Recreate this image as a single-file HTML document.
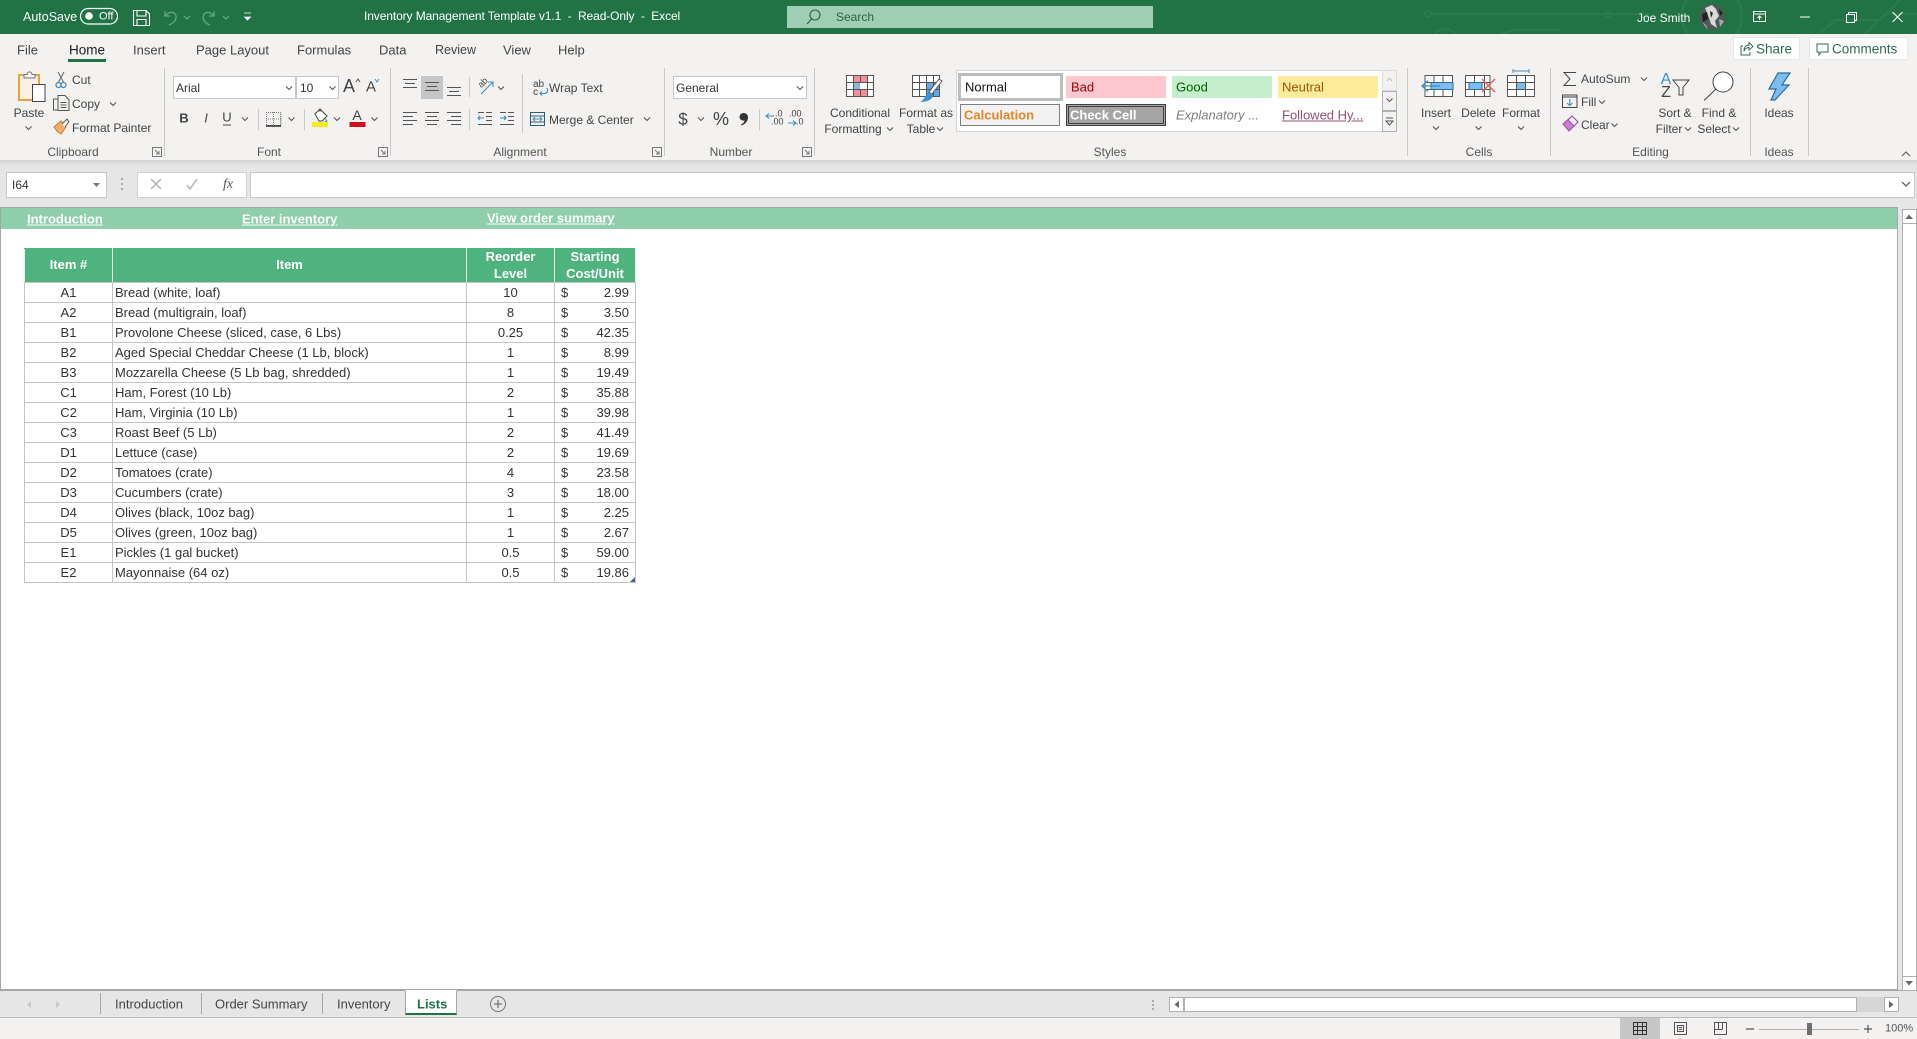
<!DOCTYPE html>
<html lang="en"><head><meta charset="utf-8"><title>Inventory Management Template v1.1 - Read-Only - Excel</title>
<style>
html,body{margin:0;padding:0;width:1917px;height:1039px;overflow:hidden;background:#fff;font-family:"Liberation Sans",sans-serif;color:#444}
.b{position:absolute;box-sizing:border-box}
.t{position:absolute;white-space:nowrap;line-height:1;transform:translateY(-50%);font-size:12px}
.c{transform:translate(-50%,-50%)}
.g{color:#555}
.w{color:#fff}
svg{position:absolute;left:0;top:0}
table{position:absolute;left:24px;top:248px;border-collapse:collapse;table-layout:fixed;width:611px;font-size:13px;color:#333}
td,th{border:1px solid #c4c4c4;padding:0;height:19px;line-height:19px;box-sizing:border-box;white-space:nowrap;overflow:hidden}
th{background:#4fb37f;color:#fff;font-weight:bold;text-align:center;height:34px;line-height:16.5px;border-color:#4fb37f #e4f2ea #c4c4c4 #e4f2ea}
td.n{padding-left:2px}
td.m{text-align:center}
td.p{padding:0 6px 0 6px}
td.p b{font-weight:normal;float:right}
.lk{position:absolute;color:#fff;font-weight:bold;font-size:13px;text-decoration:underline;line-height:1;transform:translateY(-50%);white-space:nowrap}
</style></head><body>
<!-- backgrounds -->
<div class="b" style="left:0;top:0;width:1917px;height:34px;background:#217346"></div>
<div class="b" style="left:0;top:34px;width:1917px;height:126px;background:#f3f2f1"></div>
<div class="b" style="left:0;top:160px;width:1917px;height:47px;background:#e6e6e6"></div>
<div class="b" style="left:0;top:160px;width:1917px;height:6px;background:linear-gradient(#d2d2d2,#e6e6e6)"></div>
<div class="b" style="left:1898px;top:207px;width:19px;height:783px;background:#e6e6e6"></div>
<div class="b" style="left:0;top:207px;width:1898px;height:783px;background:#fff;border:1px solid #a6a6a6;border-width:1px 1px 1px 1px"></div>
<div class="b" style="left:1px;top:208px;width:1896px;height:21px;background:#8fcfac"></div>
<div class="b" style="left:0;top:990px;width:1917px;height:28px;background:#e6e6e6;border-top:1px solid #a6a6a6;border-bottom:1px solid #b8b8b8"></div>
<div class="b" style="left:0;top:1018px;width:1917px;height:21px;background:#f3f2f1"></div>
<!-- search -->
<div class="b" style="left:787px;top:6px;width:366px;height:22px;background:#a0ceb5"></div>
<!-- share / comments -->
<div class="b" style="left:1733px;top:37px;width:67px;height:23px;background:#fff;border:1px solid #e8e8e8"></div>
<div class="b" style="left:1809px;top:37px;width:99px;height:23px;background:#fff;border:1px solid #e8e8e8"></div>
<!-- selects -->
<div class="b" style="left:173px;top:76px;width:123px;height:23px;background:#fff;border:1px solid #c8c8c8"></div>
<div class="b" style="left:296px;top:76px;width:43px;height:23px;background:#fff;border:1px solid #c8c8c8"></div>
<div class="b" style="left:673px;top:76px;width:134px;height:23px;background:#fff;border:1px solid #c8c8c8"></div>
<div class="b" style="left:421px;top:76px;width:22px;height:23px;background:#c6c6c6"></div>
<!-- style gallery -->
<div class="b" style="left:956px;top:70px;width:427px;height:62px;background:#fff;border:1px solid #d6d6d6"></div>
<div class="b" style="left:958px;top:73px;width:105px;height:28px;background:#fff;border:3px solid #bdbdbd"></div>
<div class="b" style="left:1066px;top:76px;width:100px;height:22px;background:#ffc7ce"></div>
<div class="b" style="left:1172px;top:76px;width:100px;height:22px;background:#c6efce"></div>
<div class="b" style="left:1278px;top:76px;width:100px;height:22px;background:#ffeb9c"></div>
<div class="b" style="left:960px;top:104px;width:100px;height:22px;background:#f2f2f2;border:1px solid #7f7f7f"></div>
<div class="b" style="left:1066px;top:104px;width:100px;height:22px;background:#a5a5a5;border:3px double #3f3f3f"></div>
<div class="b" style="left:1382px;top:70px;width:15px;height:21px;background:#f3f2f1;border:1px solid #dcdcdc"></div>
<div class="b" style="left:1382px;top:91px;width:15px;height:20px;background:#f3f2f1;border:1px solid #b0b0b0"></div>
<div class="b" style="left:1382px;top:111px;width:15px;height:21px;background:#f3f2f1;border:1px solid #b0b0b0"></div>
<!-- formula bar -->
<div class="b" style="left:6px;top:172px;width:101px;height:26px;background:#fff;border:1px solid #c8c8c8"></div>
<div class="b" style="left:137px;top:172px;width:110px;height:26px;background:#fff;border:1px solid #d0d0d0"></div>
<div class="b" style="left:250px;top:172px;width:1665px;height:26px;background:#fff;border:1px solid #c8c8c8"></div>
<!-- scrollbars -->
<div class="b" style="left:1902px;top:209px;width:15px;height:781px;background:#fff;border:1px solid #b0b0b0"></div>
<div class="b" style="left:1902px;top:209px;width:15px;height:15px;background:#fff;border:1px solid #b0b0b0"></div>
<div class="b" style="left:1902px;top:976px;width:15px;height:15px;background:#fff;border:1px solid #b0b0b0"></div>
<div class="b" style="left:1169px;top:997px;width:15px;height:15px;background:#fff;border:1px solid #b0b0b0"></div>
<div class="b" style="left:1184px;top:997px;width:673px;height:15px;background:#fff;border:1px solid #b0b0b0"></div>
<div class="b" style="left:1857px;top:997px;width:27px;height:15px;background:#d6d6d6"></div>
<div class="b" style="left:1884px;top:997px;width:15px;height:15px;background:#fff;border:1px solid #b0b0b0"></div>
<!-- lists tab -->
<div class="b" style="left:405px;top:990px;width:52px;height:25px;background:#fff;border:1px solid #a6a6a6;border-top:1px solid #fff;border-bottom:2px solid #217346"></div>
<div class="b" style="left:1620px;top:1018px;width:40px;height:21px;background:#c6c6c6"></div>

<!-- links -->
<span class="lk" style="left:27px;top:219px">Introduction</span>
<span class="lk" style="left:242px;top:219px">Enter inventory</span>
<span class="lk" style="left:487px;top:218px">View order summary</span>

<table>
<colgroup><col style="width:88px"><col style="width:354px"><col style="width:88px"><col style="width:81px"></colgroup>
<tr><th>Item #</th><th>Item</th><th>Reorder<br>Level</th><th>Starting<br>Cost/Unit</th></tr>
<tr style="height:20px"><td class="m">A1</td><td class="n">Bread (white, loaf)</td><td class="m">10</td><td class="p">$<b>2.99</b></td></tr>
<tr style="height:20px"><td class="m">A2</td><td class="n">Bread (multigrain, loaf)</td><td class="m">8</td><td class="p">$<b>3.50</b></td></tr>
<tr style="height:20px"><td class="m">B1</td><td class="n">Provolone Cheese (sliced, case, 6 Lbs)</td><td class="m">0.25</td><td class="p">$<b>42.35</b></td></tr>
<tr style="height:20px"><td class="m">B2</td><td class="n">Aged Special Cheddar Cheese (1 Lb, block)</td><td class="m">1</td><td class="p">$<b>8.99</b></td></tr>
<tr style="height:20px"><td class="m">B3</td><td class="n">Mozzarella Cheese (5 Lb bag, shredded)</td><td class="m">1</td><td class="p">$<b>19.49</b></td></tr>
<tr style="height:20px"><td class="m">C1</td><td class="n">Ham, Forest (10 Lb)</td><td class="m">2</td><td class="p">$<b>35.88</b></td></tr>
<tr style="height:20px"><td class="m">C2</td><td class="n">Ham, Virginia (10 Lb)</td><td class="m">1</td><td class="p">$<b>39.98</b></td></tr>
<tr style="height:20px"><td class="m">C3</td><td class="n">Roast Beef (5 Lb)</td><td class="m">2</td><td class="p">$<b>41.49</b></td></tr>
<tr style="height:20px"><td class="m">D1</td><td class="n">Lettuce (case)</td><td class="m">2</td><td class="p">$<b>19.69</b></td></tr>
<tr style="height:20px"><td class="m">D2</td><td class="n">Tomatoes (crate)</td><td class="m">4</td><td class="p">$<b>23.58</b></td></tr>
<tr style="height:20px"><td class="m">D3</td><td class="n">Cucumbers (crate)</td><td class="m">3</td><td class="p">$<b>18.00</b></td></tr>
<tr style="height:20px"><td class="m">D4</td><td class="n">Olives (black, 10oz bag)</td><td class="m">1</td><td class="p">$<b>2.25</b></td></tr>
<tr style="height:20px"><td class="m">D5</td><td class="n">Olives (green, 10oz bag)</td><td class="m">1</td><td class="p">$<b>2.67</b></td></tr>
<tr style="height:20px"><td class="m">E1</td><td class="n">Pickles (1 gal bucket)</td><td class="m">0.5</td><td class="p">$<b>59.00</b></td></tr>
<tr style="height:20px"><td class="m">E2</td><td class="n">Mayonnaise (64 oz)</td><td class="m">0.5</td><td class="p">$<b>19.86</b></td></tr>
</table>

<!-- SVG icons -->
<svg width="1917" height="1039" viewBox="0 0 1917 1039" fill="none" stroke-width="1">
<defs><path id="c" d="M-3-1.5 0 1.5 3-1.5" stroke="#555" fill="none" stroke-width="1.1"/>
<path id="dl" d="M.5.5H9.5V9.5H.5ZM3 3 7 7M7 4V7H4" stroke="#777" fill="none"/></defs>
<!-- circuit pattern, clipped to the title bar -->
<svg x="0" y="0" width="1917" height="34" style="position:static">
<g stroke="#2a7a4e" stroke-width="2">
<path d="M1431 14H1605L1650 14M1500 34 1515 30H1560"/>
<circle cx="1428" cy="14" r="3"/><circle cx="1608" cy="14" r="3"/>
<circle cx="1445" cy="42" r="13"/>
<circle cx="1712" cy="16" r="30"/>
<path d="M1820 34 1835 20H1880L1900 0M1865 34 1885 14H1917"/>
</g></svg>
<!-- toggle -->
<rect x="80.5" y="8.5" width="37" height="15.500" rx="7.700" stroke="#fff" stroke-width="1.200"/>
<circle cx="89" cy="16" r="3.800" fill="#fff"/>
<!-- save -->
<g stroke="#fff" stroke-width="1.100"><path d="M133.500 10.500H146L149.500 14V25.500H133.500ZM137 10.500V16H146V10.500M137 25.500V19.500H146V25.500"/></g>
<!-- undo / redo -->
<g stroke="#6aa888" stroke-width="1.200"><path d="M165 11V16H170M165 16C170 10 177 12 176 18 175.500 21 172 24 169 25"/><path d="M214 11V16H209M214 16C209 10 203 12 203 18 204 21 206 24 210 25"/>
<path d="M184 16 187 19 190 16M223 16 226 19 229 16"/></g>
<path d="M244 13H251M244.500 17H250.500L247.500 20Z" stroke="#fff" fill="#fff" stroke-width=".8"/>
<!-- search icon -->
<g stroke="#2f5f47" stroke-width="1.100"><circle cx="815" cy="15" r="5"/><path d="M811.500 19 807 24"/></g>
<!-- avatar -->
<circle cx="1712" cy="17" r="13" fill="#4c5a53"/>
<path d="M1705 8 1712 5 1716 9 1719 16 1715 21 1717 28 1711 24 1708 15Z" fill="#d8d8d8"/>
<path d="M1702 14 1707 12 1708 19 1703 22ZM1719 9 1723 13 1720 16Z" fill="#222"/>
<path d="M1719 19 1724 21 1720 27ZM1702 22 1706 25 1708 30Z" fill="#aaa"/>
<path d="M1710 11 1713 13 1711 18Z" fill="#222"/>
<!-- window controls -->
<g stroke="#fff" stroke-width="1"><path d="M1753.500 11.500H1765.500V21.500H1753.500ZM1753.500 14H1765.500M1759.500 20V16M1757.500 18 1759.500 16 1761.500 18"/>
<path d="M1800 17H1810"/><path d="M1846.500 14.500H1854.500V22.500H1846.500ZM1848.500 14.500V12.500H1856.500V20.500H1854.500"/><path d="M1892.500 12 1902.500 22M1902.500 12 1892.500 22"/></g>
<!-- home underline -->
<rect x="68" y="59" width="38" height="3" fill="#217346"/>
<!-- share/comment icons -->
<g stroke="#3a6a52" stroke-width="1"><path d="M1743 46H1741V55H1750V52M1744 51C1744 47 1746 45 1749 45V42.500L1753 46.500 1749 50V47.500C1747 47.500 1745 49 1744 51Z"/>
<path d="M1817 44H1828V52H1821L1819 55V52H1817Z"/></g>
<!-- ribbon separators -->
<g stroke="#c8c8c8"><path d="M164.500 68V156M390.500 68V156M664.500 68V156M814.500 68V156M1407.500 68V156M1550.500 68V156M1750.500 68V156M1808.500 68V156"/>
<path d="M258.500 109V130M304.500 109V130M469.500 77V97M469.500 109V130M522.500 74V133M759.500 109V130"/></g>
<!-- dialog launchers -->
<use href="#dl" x="152" y="147"/><use href="#dl" x="378" y="147"/><use href="#dl" x="652" y="147"/><use href="#dl" x="802" y="147"/>
<!-- chevrons -->
<g>
<use href="#c" x="28.500" y="128"/><use href="#c" x="113" y="104"/><use href="#c" x="289" y="88"/><use href="#c" x="332.500" y="88"/>
<use href="#c" x="245" y="119"/><use href="#c" x="291.500" y="119"/><use href="#c" x="337" y="119"/><use href="#c" x="374.500" y="119"/>
<use href="#c" x="501" y="88"/><use href="#c" x="647" y="119"/><use href="#c" x="800" y="88"/><use href="#c" x="701" y="119"/>
<use href="#c" x="890" y="129"/><use href="#c" x="940" y="129"/>
<use href="#c" x="1436" y="128"/><use href="#c" x="1478.500" y="128"/><use href="#c" x="1521" y="128"/>
<use href="#c" x="1644" y="79"/><use href="#c" x="1602" y="102"/><use href="#c" x="1614.500" y="125"/><use href="#c" x="1688" y="129"/><use href="#c" x="1736" y="129"/>
<use href="#c" x="1389.500" y="100"/>
</g>
<!-- clipboard -->
<path d="M19 75H39V100H19Z" stroke="#e8a33d" stroke-width="2" fill="#f8f1e4"/>
<path d="M24 78V74.500H27C27 71 32 71 32 74.500H35V78Z" stroke="#777" fill="#f3f2f1"/>
<rect x="32.500" y="84.500" width="12.500" height="17" fill="#fff" stroke="#444"/>
<g stroke="#666"><path d="M58 72 63.500 82M64 72 58.500 82"/></g>
<g stroke="#3d8fc4" stroke-width="1.300"><circle cx="58.500" cy="85" r="2.500"/><circle cx="63.500" cy="85" r="2.500"/></g>
<g stroke="#555"><path d="M58 99H53.500V110H58M58 95.500H65L69 100V110.500H58ZM60.500 102.500H66.500M60.500 105H66.500M60.500 107.500H66.500"/></g>
<path d="M54 127 61 121 66 127 61 134 57 131Z" fill="#efb070" stroke="#d47a2a"/>
<path d="M62 124 67 119 69 122 65 127" stroke="#555" fill="#fff"/>
<!-- font icons -->
<path d="M356 82 358 79 360 82" stroke="#555"/>
<path d="M375 79 377 82 379 79" stroke="#3d8fc4"/>
<path d="M223 125H231" stroke="#444"/>
<path d="M266 112.500H281V125.500H266" stroke="#777" stroke-dasharray="1 1"/><path d="M266.500 112V125M280.500 112V125M273.500 112V125M266 119H281" stroke="#888" stroke-dasharray="1 1"/><path d="M266 126H281" stroke="#222" stroke-width="1.400"/>
<path d="M315 114 320 109 327 116 322 121H319ZM320 109V112" stroke="#444" fill="#fff"/><path d="M325 118 327 121 325 122" stroke="#3d8fc4"/>
<rect x="312" y="122" width="16" height="5" fill="#f4ec1f"/>
<rect x="349.500" y="122" width="16" height="5" fill="#d0101c"/>
<!-- align -->
<g stroke="#555"><path d="M403 79.500H417M405 83.500H415M403 87.500H417"/>
<path d="M425 82.500H439M427 86.500H437M425 90.500H439"/>
<path d="M447 87.500H461M449 91.500H459M447 95.500H461"/>
<path d="M403 112.500H417M403 116.500H413M403 120.500H417M403 124.500H413"/>
<path d="M425 112.500H439M427 116.500H437M425 120.500H439M427 124.500H437"/>
<path d="M447 112.500H461M451 116.500H461M447 120.500H461M451 124.500H461"/>
<path d="M486 112.500H492M486 116.500H492M486 120.500H492M478 124.500H492M478 112.500H484"/>
<path d="M508 112.500H514M500 112.500H506M508 116.500H514M508 120.500H514M500 124.500H514"/></g>
<g stroke="#3d8fc4" stroke-width="1.100"><path d="M478 118H484M480 116 478 118 480 120"/><path d="M500 118H506M504 116 506 118 504 120"/>
<path d="M481 94 493 82M488 82H493V87"/>
<path d="M547 88C549 92 546 94 543 93.500H540M542 91.500 540 93.500 542 95.500"/></g>
<!-- merge -->
<path d="M530.500 112.500H544.500V125.500H530.500ZM530.500 116H544.500M530.500 122H544.500" stroke="#2a5d7a"/>
<path d="M533 119H542M535 117 533 119 535 121M540 117 542 119 540 121" stroke="#3d8fc4"/>
<!-- comma style -->
<path d="M743.500 113C746.500 113 748 115 748 117.500 748 121 745.500 124 741.500 125.500L741 124.500C743 123.500 744.500 122 744.500 120.500 741.500 121 739.500 119 739.500 117 739.500 114.800 741.300 113 743.500 113Z" fill="#333"/>
<!-- decimals -->
<path d="M766 116H774M769 113.500 766 116 769 118.500" stroke="#3d8fc4" stroke-width="1.100"/>
<path d="M788 123H796M793 120.500 796 123 793 125.500" stroke="#3d8fc4" stroke-width="1.100"/>
<!-- conditional formatting -->
<g>
<rect x="846.500" y="75.500" width="27" height="21" fill="#fff"/>
<path d="M853 75.500H867V82.500H853ZM853 89.500H867V96.500H853Z" fill="#f38f96"/><rect x="853" y="82.500" width="7" height="7" fill="#8ab6e0"/>
<path d="M846.500 75.500H873.500V96.500H846.500ZM846.500 82.500H873.500M846.500 89.500H873.500M853.500 75.500V96.500M867.500 75.500V96.500" stroke="#555"/>
<path d="M860.500 75.500V82.500M860.500 89.500V96.500" stroke="#555"/>
<!-- format as table -->
<rect x="912.500" y="75.500" width="27" height="21" fill="#fff"/>
<rect x="926" y="82.500" width="14" height="14" fill="#62a7e6"/>
<path d="M912.500 75.500H939.500V96.500H912.500ZM912.500 82.500H939.500M912.500 89.500H939.500M919.500 75.500V96.500M926.500 75.500V96.500M933.500 75.500V96.500" stroke="#555"/>
<path d="M942 81 932 94 929 92 939 79Z" fill="#fff" stroke="#555"/>
<path d="M930 92 933.500 95C932 100 927 102 920 102 925 100 925 94 930 92Z" fill="#3d8fd8"/>
</g>
<!-- gallery arrows -->
<path d="M1387 81 1389.500 78 1392 81" stroke="#c0c0c0"/>
<path d="M1386 118H1393M1386 121H1393L1389.500 125Z" stroke="#555" />
<!-- cells -->
<g>
<path d="M1425 75.500H1452.500V96.500H1425ZM1425 82.500H1452.500M1425 89.500H1452.500M1434 75.500V96.500M1443 75.500V96.500" stroke="#555" fill="#fff"/>
<rect x="1431" y="82.500" width="22" height="7" fill="#7dbdee" stroke="#2a6da0"/>
<path d="M1440 86H1422M1428 80.500 1422 86 1428 91.500" stroke="#3d8fc4" stroke-width="1.300" fill="none"/>
<path d="M1465.500 75.500H1490V96.500H1465.500ZM1465.500 82.500H1490M1465.500 89.500H1490M1474.500 75.500V96.500M1484.500 75.500V96.500" stroke="#555" fill="#fff"/>
<rect x="1469" y="82.500" width="13" height="7" fill="#7dbdee" stroke="#2a6da0"/>
<path d="M1482 79 1495 92M1495 79 1482 92" stroke="#e8625c" stroke-width="1.500"/>
<rect x="1507.500" y="75.500" width="27" height="21" fill="#fff"/>
<rect x="1516" y="82" width="10" height="8" fill="#7dbdee"/>
<path d="M1507.500 75.500H1534.500V96.500H1507.500ZM1507.500 82.500H1534.500M1507.500 89.500H1534.500M1516.500 75.500V96.500M1525.500 75.500V96.500" stroke="#555"/>
<path d="M1513 71H1529M1513 69V73M1529 69V73" stroke="#3d8fc4"/>
</g>
<!-- editing -->
<path d="M1576 72.500H1564L1570 79 1564 85.500H1576" stroke="#444"/>
<path d="M1562.500 95H1577V107.500H1562.500ZM1562.500 97H1577" stroke="#444"/>
<path d="M1569.800 99V105.500M1567 103 1569.800 105.500 1572.500 103" stroke="#3d8fc4" stroke-width="1.100"/>
<path d="M1563 124 1572 116 1578 122 1569 131Z" fill="#c97fd0" stroke="#9b4ea3"/><path d="M1572 116 1578 122 1574 126 1568 120Z" fill="#f6eef7" stroke="#9b4ea3"/>
<path d="M1673 80H1689L1683 87.500V95H1679V87.500Z" stroke="#444"/>
<circle cx="1723" cy="82" r="10" stroke="#444" fill="#fff"/><path d="M1716 89 1704 100.500" stroke="#444"/>
<!-- bolt -->
<path d="M1778 73H1790L1782 85H1789L1775 100H1771L1776 89H1769Z" fill="#7dbdee" stroke="#2a6da0" stroke-width="1.200"/>
<path d="M1902 156 1906 152 1910 156" stroke="#555"/>
<!-- formula bar -->
<path d="M93 183H100L96.500 187Z" fill="#777"/>
<g fill="#aaa"><rect x="121" y="178" width="2" height="2"/><rect x="121" y="183" width="2" height="2"/><rect x="121" y="188" width="2" height="2"/>
<rect x="1152" y="1000" width="2" height="2"/><rect x="1152" y="1004" width="2" height="2"/><rect x="1152" y="1008" width="2" height="2"/></g>
<path d="M151 179 161 189M161 179 151 189M187 185 190 189 197 179" stroke="#bbb" stroke-width="1.600"/>
<path d="M1902 182 1906 186 1910 182" stroke="#555" stroke-width="1.200"/>
<!-- scrollbar arrows -->
<path d="M1905.500 219H1913L1909 214.500Z M1905.500 981H1913L1909 985.500Z" fill="#666"/>
<path d="M1179 1001V1008L1174.500 1004.500Z M1889 1001V1008L1893.500 1004.500Z" fill="#666"/>
<!-- sheet nav -->
<path d="M31 1001V1008L27 1004.500ZM56 1001V1008L60 1004.500Z" fill="#c8c8c8"/>
<path d="M100.500 993V1014M201.500 993V1014M322.500 993V1014" stroke="#a6a6a6"/>
<g stroke="#777"><circle cx="498" cy="1004" r="7.500"/><path d="M494 1004H502M498 1000V1008" stroke-width="1.300"/></g>
<!-- status icons -->
<path d="M1633.500 1022.500H1646.500V1034.500H1633.500ZM1633.500 1026.500H1646.500M1633.500 1030.500H1646.500M1637.500 1022.500V1034.500M1642.500 1022.500V1034.500" stroke="#333"/>
<path d="M1674.500 1022.500H1686.500V1034.500H1674.500ZM1677.500 1025.500H1683.500V1031.500H1677.500ZM1679 1027.500H1682M1679 1029.500H1682" stroke="#555"/>
<path d="M1714.500 1022.500H1726.500V1034.500H1714.500ZM1714.500 1029.500H1722.500M1718.500 1022.500V1029.500M1722.500 1022.500V1029.500" stroke="#555"/>
<path d="M1746 1029H1754M1864 1029H1872M1868 1025V1033" stroke="#555" stroke-width="1.200"/>
<path d="M1759 1029.500H1859" stroke="#b0b0b0"/>
<rect x="1807" y="1023" width="5" height="12" fill="#6f6f6f"/>
<rect x="630" y="577" width="5" height="5" fill="#4b5c9c" style="clip-path:polygon(100% 0,100% 100%,0 100%)"/>
</svg>

<!-- Title bar text -->
<span class="t w" style="left:23px;top:17px;font-size:12.500px">AutoSave</span>
<span class="t w" style="left:99px;top:17px;font-size:11px">Off</span>
<span class="t w" style="left:364px;top:16px;font-size:12px;letter-spacing:-.1px">Inventory Management Template v1.1&nbsp; -&nbsp; Read-Only&nbsp; -&nbsp; Excel</span>
<span class="t" style="left:836px;top:17px;font-size:12px;color:#2f5f47">Search</span>
<span class="t w" style="left:1637px;top:18px;font-size:12px">Joe Smith</span>
<!-- Tabs -->
<span class="t" style="left:17px;top:50px;font-size:13px">File</span>
<span class="t" style="left:69px;top:50px;font-size:13.500px;color:#222">Home</span>
<span class="t" style="left:133px;top:50px;font-size:13px">Insert</span>
<span class="t" style="left:196px;top:50px;font-size:13px">Page Layout</span>
<span class="t" style="left:297px;top:50px;font-size:13px">Formulas</span>
<span class="t" style="left:379px;top:50px;font-size:13px">Data</span>
<span class="t" style="left:435px;top:50px;font-size:12.500px">Review</span>
<span class="t" style="left:503px;top:50px;font-size:13px">View</span>
<span class="t" style="left:558px;top:50px;font-size:13px">Help</span>
<span class="t" style="left:1756px;top:49px;font-size:13.500px;color:#2f6b4c">Share</span>
<span class="t" style="left:1832px;top:49px;font-size:13.500px;color:#2f6b4c">Comments</span>
<!-- Clipboard -->
<span class="t c" style="left:29px;top:113px">Paste</span>
<span class="t" style="left:72px;top:80px">Cut</span>
<span class="t" style="left:72px;top:104px">Copy</span>
<span class="t" style="left:72px;top:128px">Format Painter</span>
<span class="t c g" style="left:73px;top:152px">Clipboard</span>
<!-- Font -->
<span class="t" style="left:176px;top:88px;font-size:12px;color:#333">Arial</span>
<span class="t" style="left:300px;top:88px;font-size:12px;color:#333">10</span>
<span class="t" style="left:343px;top:86px;font-size:18px">A</span>
<span class="t" style="left:366px;top:87px;font-size:15px">A</span>
<span class="t c" style="left:184px;top:118px;font-size:13px;font-weight:bold">B</span>
<span class="t c" style="left:206px;top:118px;font-size:13px;font-style:italic">I</span>
<span class="t c" style="left:227px;top:117px;font-size:13px">U</span>
<span class="t c" style="left:357px;top:115px;font-size:14px">A</span>
<span class="t c g" style="left:269px;top:152px">Font</span>
<!-- Alignment -->
<span class="t" style="left:478px;top:83px;font-size:9px;transform:translateY(-50%) rotate(-45deg)">ab</span>
<span class="t" style="left:533px;top:85px;font-size:10px">ab</span>
<span class="t" style="left:533px;top:93px;font-size:10px">c</span>
<span class="t" style="left:549px;top:88px">Wrap Text</span>
<span class="t" style="left:549px;top:120px">Merge &amp; Center</span>
<span class="t c g" style="left:520px;top:152px">Alignment</span>
<!-- Number -->
<span class="t" style="left:676px;top:88px;color:#333">General</span>
<span class="t c" style="left:683px;top:119px;font-size:17px">$</span>
<span class="t c" style="left:721px;top:119px;font-size:18px">%</span>
<span class="t" style="left:775px;top:114px;font-size:9px">.0</span>
<span class="t" style="left:771px;top:122px;font-size:9px">.00</span>
<span class="t" style="left:789px;top:114px;font-size:9px">.00</span>
<span class="t" style="left:796px;top:122px;font-size:9px">.0</span>
<span class="t c g" style="left:731px;top:152px">Number</span>
<!-- Styles -->
<span class="t c" style="left:860px;top:113px">Conditional</span>
<span class="t c" style="left:853px;top:129px">Formatting</span>
<span class="t c" style="left:926px;top:113px">Format as</span>
<span class="t c" style="left:921px;top:129px">Table</span>
<span class="t" style="left:965px;top:87px;font-size:13px;color:#111">Normal</span>
<span class="t" style="left:1071px;top:87px;font-size:13px;color:#9c0006">Bad</span>
<span class="t" style="left:1176px;top:87px;font-size:13px;color:#006100">Good</span>
<span class="t" style="left:1282px;top:87px;font-size:13px;color:#9c5700">Neutral</span>
<span class="t" style="left:964px;top:115px;font-size:13px;font-weight:bold;color:#e8862a">Calculation</span>
<span class="t" style="left:1070px;top:115px;font-size:13px;font-weight:bold;color:#fff">Check Cell</span>
<span class="t" style="left:1176px;top:115px;font-size:13px;font-style:italic;color:#7f7f7f">Explanatory ...</span>
<span class="t" style="left:1282px;top:115px;font-size:13px;color:#954f72;text-decoration:underline">Followed Hy...</span>
<span class="t c g" style="left:1110px;top:152px">Styles</span>
<!-- Cells -->
<span class="t c" style="left:1436px;top:113px">Insert</span>
<span class="t c" style="left:1478.500px;top:113px">Delete</span>
<span class="t c" style="left:1521px;top:113px">Format</span>
<span class="t c g" style="left:1479px;top:152px">Cells</span>
<!-- Editing -->
<span class="t" style="left:1581px;top:79px">AutoSum</span>
<span class="t" style="left:1581px;top:102px">Fill</span>
<span class="t" style="left:1581px;top:125px">Clear</span>
<span class="t c" style="left:1666px;top:80px;font-size:16px;color:#3d8fc4">A</span>
<span class="t c" style="left:1666px;top:93px;font-size:16px">Z</span>
<span class="t c" style="left:1675px;top:113px">Sort &amp;</span>
<span class="t c" style="left:1669px;top:129px">Filter</span>
<span class="t c" style="left:1719px;top:113px">Find &amp;</span>
<span class="t c" style="left:1714px;top:129px">Select</span>
<span class="t c g" style="left:1650.500px;top:152px">Editing</span>
<!-- Ideas -->
<span class="t c" style="left:1779px;top:113px">Ideas</span>
<span class="t c g" style="left:1779px;top:152px">Ideas</span>
<!-- Formula bar -->
<span class="t" style="left:12px;top:185px;color:#333">I64</span>
<span class="t c" style="left:228px;top:185px;font-family:'Liberation Serif',serif;font-style:italic;font-size:14px;color:#555">fx</span>
<!-- Sheet tabs -->
<span class="t" style="left:115px;top:1004px;font-size:13px">Introduction</span>
<span class="t" style="left:215px;top:1004px;font-size:13px">Order Summary</span>
<span class="t" style="left:337px;top:1004px;font-size:13px">Inventory</span>
<span class="t" style="left:417px;top:1004px;font-size:13px;font-weight:bold;color:#217346">Lists</span>
<span class="t" style="left:1885px;top:1029px;font-size:11px;color:#555">100%</span>
</body></html>
